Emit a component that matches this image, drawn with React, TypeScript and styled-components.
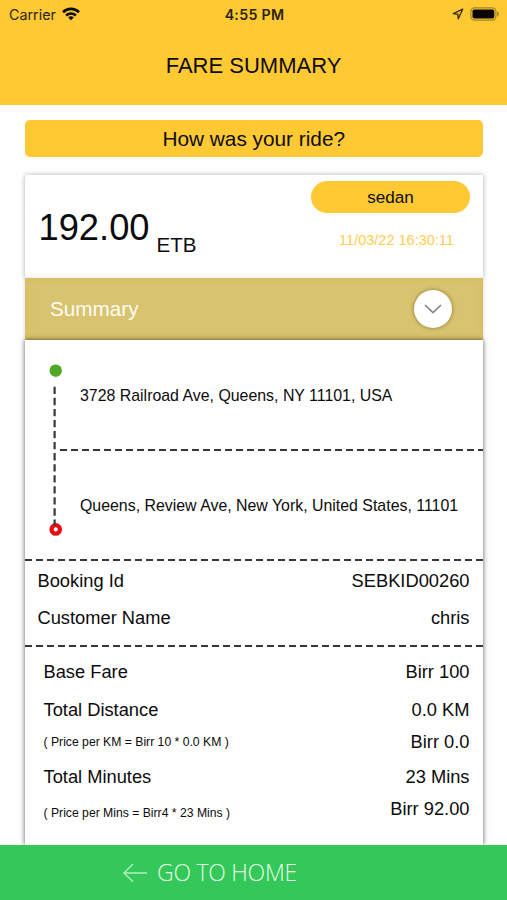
import React from "react";
import styled, { createGlobalStyle } from "styled-components";

const Global = createGlobalStyle`
  * { box-sizing: border-box; }
  body {
    margin: 0;
    background: #fff;
    color: #0c0c0c;
    font-family: "Liberation Sans", Arial, sans-serif;
  }
`;

const Screen = styled.div`
  display: flex;
  flex-direction: column;
  width: 507px;
  height: 900px;
  overflow: hidden;
  background: #fefefe;
`;

const Header = styled.header`
  flex: none;
  height: 104.5px;
  background: #ffc933;
`;

const StatusBar = styled.div`
  display: grid;
  grid-template-columns: 1fr auto 1fr;
  align-items: center;
  height: 28px;
  padding: 0 7px 0 9px;
  font-family: Inter, sans-serif;
  font-size: 14.3px;
  color: #2b240e;
`;

const Carrier = styled.div`
  display: flex;
  align-items: center;
  gap: 6px;
`;

const Clock = styled.div`
  font-weight: 600;
  font-size: 14.2px;
  letter-spacing: 0.3px;
`;

const StatusIcons = styled.div`
  display: flex;
  align-items: center;
  justify-content: flex-end;
  gap: 6px;
`;

const Title = styled.h1`
  margin: 0;
  font-size: 22px;
  font-weight: 400;
  line-height: 76px;
  text-align: center;
`;

const Content = styled.main`
  display: flex;
  flex-direction: column;
  flex: 1;
  min-height: 0;
  overflow: hidden;
  padding: 15.5px 24.5px 0 25px;
`;

const Banner = styled.div`
  flex: none;
  height: 36.5px;
  margin-bottom: 18.5px;
  border-radius: 5px;
  background: #ffc933;
  font-size: 20.8px;
  line-height: 37px;
  text-align: center;
`;

const TotalCard = styled.section`
  flex: none;
  display: flex;
  justify-content: space-between;
  height: 103px;
  padding: 5.5px 12.5px 0 13.5px;
  border-radius: 2px 2px 0 0;
  background: #fff;
  box-shadow: 0 0 5px rgba(0, 0, 0, 0.32);
`;

const Total = styled.div`
  display: flex;
  align-items: flex-start;
  gap: 7px;
`;

const Amount = styled.span`
  padding-top: 26px;
  font-size: 36.3px;
  line-height: 41px;
`;

const Currency = styled.span`
  padding-top: 52px;
  font-size: 20.6px;
  line-height: 24px;
`;

const RideMeta = styled.div`
  display: flex;
  flex-direction: column;
  align-items: stretch;
  width: 159px;
`;

const Pill = styled.div`
  height: 32px;
  border-radius: 16px;
  background: #ffc933;
  font-size: 17.1px;
  line-height: 33px;
  text-align: center;
`;

const DateText = styled.div`
  margin-top: 17px;
  padding-left: 12px;
  font-size: 14.5px;
  line-height: 20px;
  text-align: center;
  color: #ffcc4d;
`;

const SummaryBar = styled.button`
  position: relative;
  flex: none;
  display: flex;
  align-items: center;
  justify-content: space-between;
  height: 61.5px;
  padding: 0 30.5px 0 25px;
  border: 0;
  background: #d8c370;
  box-shadow: 0 0 4px rgba(0, 0, 0, 0.15), inset 0 0 7px rgba(219, 185, 80, 0.8);
  color: #fffdf2;
  font-family: inherit;
  font-size: 20.7px;
`;

const Toggle = styled.span`
  display: grid;
  place-items: center;
  width: 38px;
  height: 38px;
  border-radius: 50%;
  background: #fff;
  box-shadow: 0 0 4px rgba(80, 75, 10, 0.6);
`;

const Details = styled.section`
  position: relative;
  flex: 1;
  display: flex;
  flex-direction: column;
  background: #fff;
  box-shadow: 0 0 5px rgba(0, 0, 0, 0.65);
`;

const Route = styled.div`
  display: grid;
  grid-template-columns: 34.5px 1fr;
  height: 219px;
`;

const Track = styled.svg`
  display: block;
  width: 34px;
  height: 218px;
  overflow: visible;
`;

const Stop = styled.div<{ $line: number }>`
  height: 109px;
  padding-left: 20.5px;
  font-size: 15.9px;
  line-height: ${(p) => p.$line}px;
  white-space: nowrap;
`;

const DashedLine = styled.div`
  flex: none;
  height: 2px;
  background: repeating-linear-gradient(90deg, #383838 0 7.2px, transparent 7.2px 11px);
`;

const InfoRows = styled.div`
  padding: 1.5px 13px 7.5px 12.5px;
`;

const FareRows = styled.div`
  padding: 7px 13px 0 18.5px;
`;

const Row = styled.div<{ $h: number }>`
  display: flex;
  align-items: center;
  justify-content: space-between;
  height: ${(p) => p.$h}px;
  font-size: 18.3px;
  line-height: 22px;
`;

const Note = styled.span<{ $drop?: number }>`
  padding-top: ${(p) => p.$drop ?? 0}px;
  font-size: 12.2px;
`;

const HomeButton = styled.button`
  position: relative;
  flex: none;
  display: flex;
  align-items: center;
  gap: 9px;
  height: 55px;
  padding: 0 0 0 123px;
  border: 0;
  background: #34c759;
  color: #e4ffe9;
  font-family: "Open Sans", sans-serif;
  font-size: 23px;
  font-weight: 300;
  letter-spacing: -0.25px;
  line-height: 55px;
`;

const WifiIcon = () => (
  <svg width="18" height="14" viewBox="0 0 18 14" fill="none" stroke="#0d0a02" strokeWidth="2.6">
    <path d="M1 5.2a11.4 11.4 0 0 1 16 0" />
    <path d="M4.1 8.5a7 7 0 0 1 9.8 0" />
    <path d="M9 13.2 6.2 10.6a4 4 0 0 1 5.6 0z" fill="#0d0a02" stroke="none" />
  </svg>
);

const LocationIcon = () => (
  <svg width="12" height="12" viewBox="0 0 12 12" fill="none" stroke="#3a300f" strokeWidth="1.4" strokeLinejoin="round">
    <path d="M10.7 1.2 1.3 5.6l4.5.6.5 4.5z" />
  </svg>
);

const BatteryIcon = () => (
  <svg width="30" height="14" viewBox="0 0 30 14">
    <rect x="0.9" y="0.8" width="25" height="12.4" rx="3.6" fill="none" stroke="#a38529" strokeWidth="1.2" />
    <rect x="2.5" y="2.4" width="21.8" height="9.2" rx="1.8" fill="#080600" />
    <path d="M27.2 4.6c2.4.8 2.4 4 0 4.8z" fill="#a38529" />
  </svg>
);

const ChevronDown = () => (
  <svg width="18" height="10" viewBox="0 0 18 10" fill="none" stroke="#858585" strokeWidth="1.7">
    <path d="m1 1 8 7.5L17 1" />
  </svg>
);

const BackArrow = () => (
  <svg width="25" height="20" viewBox="0 0 25 20" fill="none" stroke="#b3f0bf" strokeWidth="1.4">
    <path d="M24 10H1M10 1 1 10l9 8.8" />
  </svg>
);

const App = () => (
  <Screen>
    <Global />
    <Header>
      <StatusBar>
        <Carrier>
          Carrier
          <WifiIcon />
        </Carrier>
        <Clock>4:55 PM</Clock>
        <StatusIcons>
          <LocationIcon />
          <BatteryIcon />
        </StatusIcons>
      </StatusBar>
      <Title>FARE SUMMARY</Title>
    </Header>
    <Content>
      <Banner>How was your ride?</Banner>
      <TotalCard>
        <Total>
          <Amount>192.00</Amount>
          <Currency>ETB</Currency>
        </Total>
        <RideMeta>
          <Pill>sedan</Pill>
          <DateText>11/03/22 16:30:11</DateText>
        </RideMeta>
      </TotalCard>
      <SummaryBar>
        Summary
        <Toggle>
          <ChevronDown />
        </Toggle>
      </SummaryBar>
      <Details>
        <Route>
          <Track viewBox="0 0 34 218">
            <circle cx="30.7" cy="30.7" r="6.2" fill="#50a625" />
            <circle cx="30.7" cy="189.4" r="4.2" fill="#fff" stroke="#ea0d12" strokeWidth="4.3" />
            <path d="M29.6 46.8V185.5" stroke="#383838" strokeWidth="2.2" strokeDasharray="7.3 3.75" />
          </Track>
          <div>
            <Stop $line={111}>3728 Railroad Ave, Queens, NY 11101, USA</Stop>
            <DashedLine />
            <Stop $line={109}>Queens, Review Ave, New York, United States, 11101</Stop>
          </div>
        </Route>
        <DashedLine />
        <InfoRows>
          <Row $h={37.5}>
            <span>Booking Id</span>
            <span>SEBKID00260</span>
          </Row>
          <Row $h={37.5}>
            <span>Customer Name</span>
            <span>chris</span>
          </Row>
        </InfoRows>
        <DashedLine />
        <FareRows>
          <Row $h={37.5}>
            <span>Base Fare</span>
            <span>Birr 100</span>
          </Row>
          <Row $h={37.5}>
            <span>Total Distance</span>
            <span>0.0 KM</span>
          </Row>
          <Row $h={26}>
            <Note>( Price per KM = Birr 10 * 0.0 KM )</Note>
            <span>Birr 0.0</span>
          </Row>
          <Row $h={45}>
            <span>Total Minutes</span>
            <span>23 Mins</span>
          </Row>
          <Row $h={19}>
            <Note $drop={7}>( Price per Mins = Birr4 * 23 Mins )</Note>
            <span>Birr 92.00</span>
          </Row>
        </FareRows>
      </Details>
    </Content>
    <HomeButton>
      <BackArrow />
      GO TO HOME
    </HomeButton>
  </Screen>
);

export default App;
